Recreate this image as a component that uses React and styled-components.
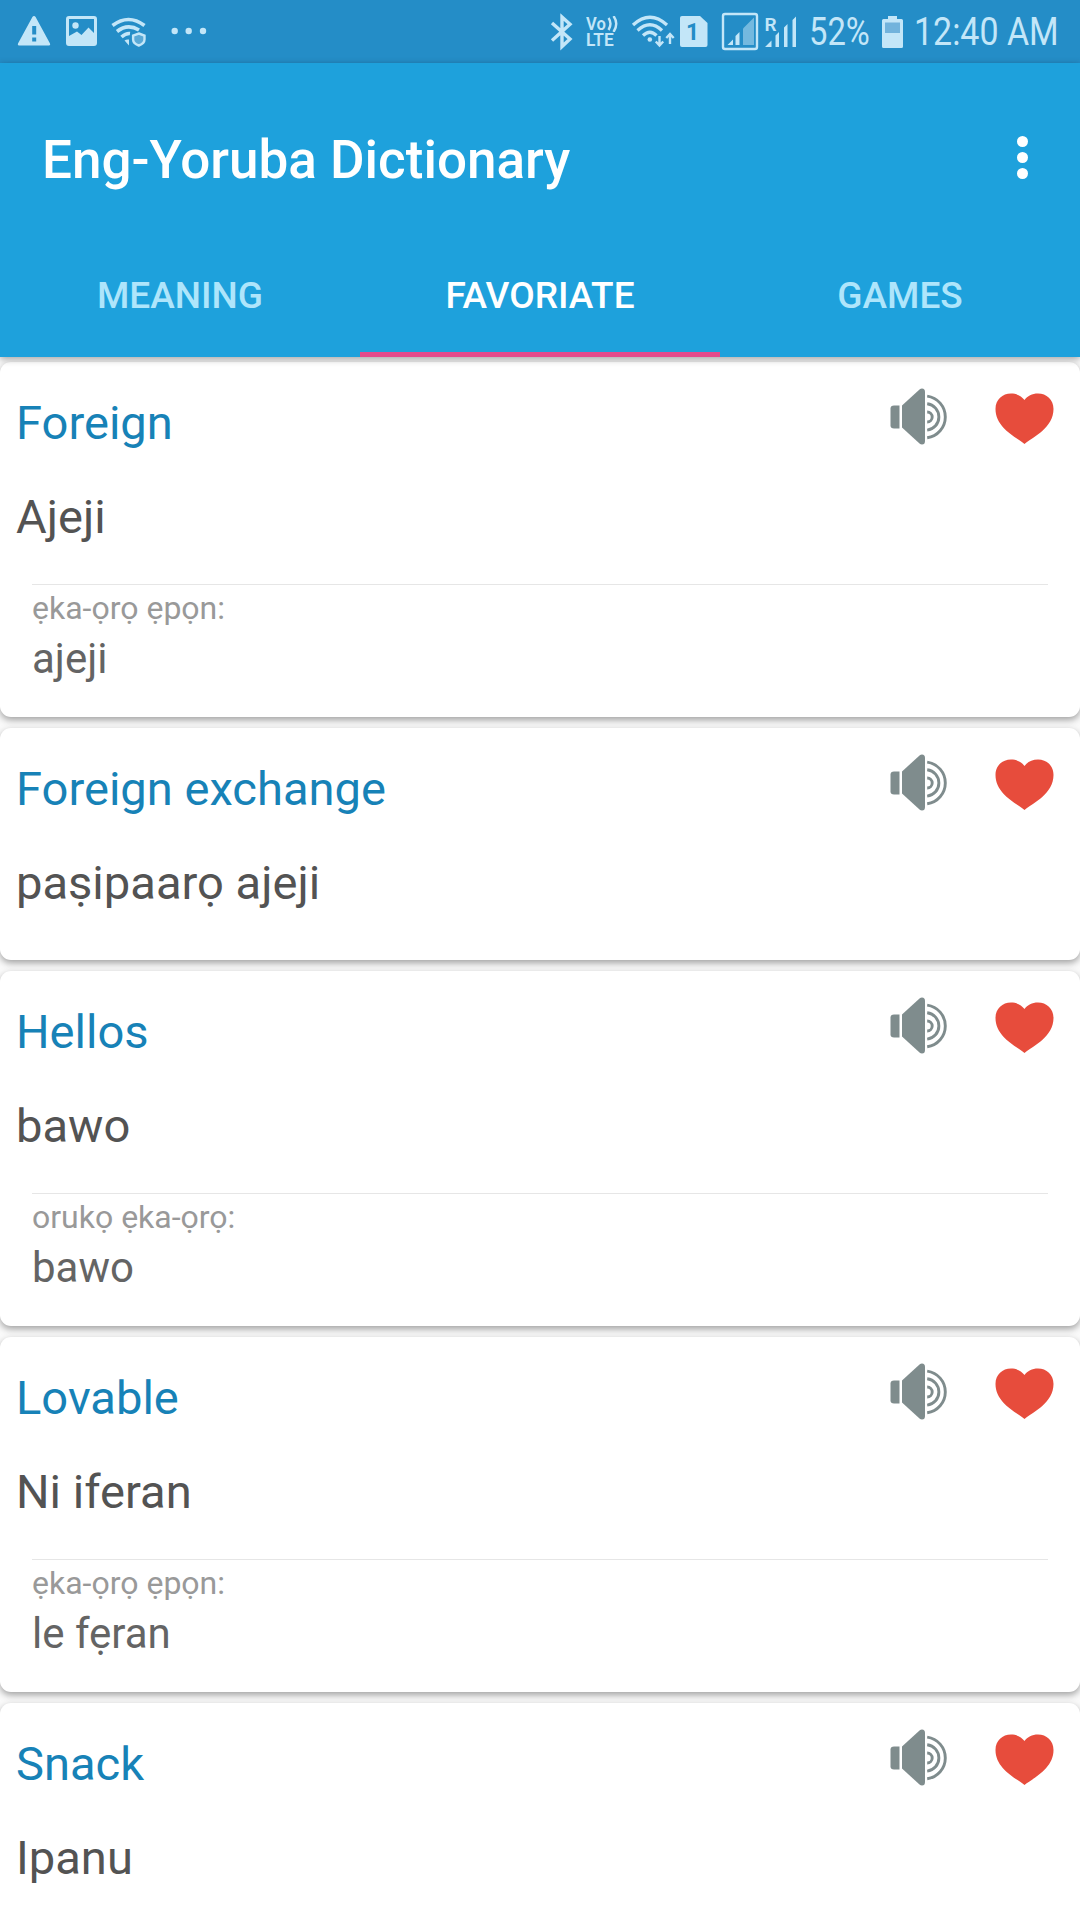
import React from 'react';
import styled, { createGlobalStyle } from 'styled-components';

const GlobalStyle = createGlobalStyle`
  * {
    box-sizing: border-box;
  }
  body {
    margin: 0;
    background: #fafafa;
    font-family: Roboto, 'Liberation Sans', sans-serif;
  }
`;

const Screen = styled.div`
  width: 1080px;
  height: 1920px;
  overflow: hidden;
  display: flex;
  flex-direction: column;
`;

const StatusBar = styled.div`
  flex: none;
  height: 63px;
  display: flex;
  justify-content: space-between;
  padding: 0 22px 0 16px;
  background: #248dc7;
  color: #c3e6f8;
`;
const StatusGroup = styled.div`
  display: flex;
`;
const StatusIcon = styled.svg`
  display: block;
  flex: none;
  height: 63px;
  width: ${props => props.$width}px;
  margin-left: ${props => props.$gap || 0}px;
  fill: currentColor;
  font-family: Roboto, sans-serif;
`;
const StatusText = styled.div`
  width: ${props => props.$width}px;
  margin-left: ${props => props.$gap}px;
  font-size: 39px;
  line-height: 65px;
  white-space: nowrap;

  span {
    display: inline-block;
    transform: scaleX(${props => props.$stretch});
    transform-origin: 0 50%;
  }
`;
const Volte = styled.div`
  width: 34px;
  margin-left: 13px;
  padding-top: 16px;
  font-size: 18px;
  font-weight: 600;
  line-height: 16px;
`;
const VolteRow = styled.div`
  height: 16px;
  display: flex;
  white-space: nowrap;

  span {
    width: ${props => props.$width}px;
    transform: scaleX(${props => props.$stretch});
    transform-origin: 0 50%;
  }
`;
const Waves = styled.svg`
  width: 12px;
  height: 16px;
  fill: none;
  stroke: currentColor;
  stroke-width: 2.4;
`;

const Header = styled.header`
  flex: none;
  position: relative;
  z-index: 1;
  background: #1ea1dc;
  color: white;
  box-shadow: 0 2px 7px rgba(0, 0, 0, 0.35);
`;
const Toolbar = styled.div`
  height: 189px;
  display: flex;
  align-items: center;
  justify-content: space-between;
  padding: 0 52px 0 42px;
`;
const Title = styled.h1`
  margin: 4px 0 0;
  font-size: 53px;
  font-weight: 500;
  line-height: 62px;
`;
const MenuButton = styled.button`
  display: flex;
  flex-direction: column;
  gap: 5px;
  padding: 0;
  border: 0;
  background: none;
`;
const Dot = styled.span`
  width: 11px;
  height: 11px;
  border-radius: 50%;
  background: white;
`;
const Tabs = styled.nav`
  height: 105px;
  display: flex;
`;
const Tab = styled.div`
  flex: 1;
  display: flex;
  justify-content: center;
  padding-top: 22px;
  border-bottom: 5px solid ${props => (props.$active ? '#e64a8b' : 'transparent')};
  color: ${props => (props.$active ? 'white' : '#aee5fb')};
  font-size: 37px;
  font-weight: 500;
  line-height: 44px;
`;

const List = styled.main`
  display: flex;
  flex-direction: column;
  gap: 11px;
  padding-top: 5px;
`;
const Card = styled.article`
  flex: none;
  height: ${props => (props.$detailed ? 355 : 232)}px;
  padding: 24px 16px 0;
  border-radius: 11px;
  background: white;
  box-shadow: 0 3px 7px rgba(0, 0, 0, 0.36);
`;
const CardTop = styled.div`
  height: 94px;
  display: flex;
  justify-content: space-between;
`;
const Word = styled.h2`
  margin: 9px 0 0;
  color: #1782b7;
  font-size: 47.1px;
  font-weight: 400;
  line-height: 56px;
`;
const Actions = styled.div`
  display: flex;
  gap: 44px;
  padding-right: 10px;
`;
const ActionIcon = styled.svg`
  width: 60px;
  height: 60px;
`;
const Meaning = styled.p`
  margin: 9px 0 0;
  color: #535353;
  font-size: 47.1px;
  line-height: 56px;
`;
const Detail = styled.div`
  margin: 39px 16px 0;
  padding-top: 4px;
  border-top: 1px solid #e6e6e6;
`;
const Label = styled.p`
  margin: 0;
  color: #999;
  font-size: 32px;
  line-height: 38px;
`;
const Usage = styled.p`
  margin: 7px 0 0;
  color: #646464;
  font-size: 42px;
  line-height: 50px;
`;

const entries = [
  { word: 'Foreign', meaning: 'Ajeji', label: 'ẹka-ọrọ ẹpọn:', usage: 'ajeji' },
  { word: 'Foreign exchange', meaning: 'paṣipaarọ ajeji' },
  { word: 'Hellos', meaning: 'bawo', label: 'orukọ ẹka-ọrọ:', usage: 'bawo' },
  { word: 'Lovable', meaning: 'Ni iferan', label: 'ẹka-ọrọ ẹpọn:', usage: 'le fẹran' },
  { word: 'Snack', meaning: 'Ipanu' },
];

const Speaker = () => (
  <ActionIcon viewBox="0 0 60 60">
    <g fill="#7f8c8d">
      <path d="M4 19.500H9.500v23H4q-3.500 0-3.500-3v-17q0-3 3.500-3z" />
      <path d="M12 19.500L29.500 3.500q1.200-1 2.500-1 3 0 3 3.500v49q0 3.500-3 3.500-1.300 0-2.500-1L12 41.500z" />
    </g>
    <g fill="none" stroke="#7f8c8d" strokeWidth="2.900">
      <path d="M37.200 26a5 5 0 0 1 0 10" />
      <path d="M37.200 17.700a13.300 13.300 0 0 1 0 26.400" />
      <path d="M37.200 10.100a21 21 0 0 1 0 41.600" />
    </g>
  </ActionIcon>
);

const Heart = () => (
  <ActionIcon viewBox="0 0 60 60">
    <path
      fill="#e74c3c"
      d="M30.500 58C21 50.500 1.500 41.500 1.500 23 1.500 13.500 8.500 7.500 17 7.500c6 0 10.500 2.500 13.500 6.500 3-4 7.500-6.500 13.500-6.500 8.500 0 15.500 6 15.500 15.500C59.500 41.500 40 50.500 30.500 58z"
    />
  </ActionIcon>
);

const LeftStatus = () => (
  <StatusGroup>
    <StatusIcon $width={36} viewBox="16 0 36 63">
      <path
        fillRule="evenodd"
        d="M34 16q1 0 1.600 1L50 43.500q.8 2-1 2H19q-1.800 0-1-2L32.400 17q.6-1 1.600-1zM32.200 26v8.500h4V26zM32.200 37.500v4h4v-4z"
      />
    </StatusIcon>
    <StatusIcon $width={32} $gap={14} viewBox="66 0 32 63">
      <path
        fillRule="evenodd"
        d="M69 16h25q3 0 3 3v24q0 3-3 3H69q-3 0-3-3V19q0-3 3-3zM69 19v17l8-4.500 4.500 3.500 7-7.500 5.500 5.500V19z"
      />
      <circle cx="75.500" cy="25.500" r="3.200" />
    </StatusIcon>
    <StatusIcon $width={38} $gap={12} viewBox="110 0 38 63">
      <g fill="none" stroke="currentColor" strokeWidth="3.600">
        <path d="M112.500 25.500Q128.500 13.500 144.500 25.500" />
        <path d="M117 31.500Q127.500 23 139 30" />
        <path d="M121.500 37Q126 33 130 33.500" />
      </g>
      <path d="M124.500 40.500q2-1.500 4.500-1v6z" />
      <path
        d="M138.800 33.500l5.700 2v4q0 4-5.700 6-5.700-2-5.700-6v-4z"
        fill="#5aa9d6"
        stroke="currentColor"
        strokeWidth="2.400"
      />
    </StatusIcon>
    <StatusIcon $width={38} $gap={22} viewBox="170 0 38 63">
      <circle cx="174.700" cy="31" r="3.200" />
      <circle cx="188.700" cy="31" r="3.200" />
      <circle cx="203" cy="31" r="3.200" />
    </StatusIcon>
  </StatusGroup>
);

const RightStatus = () => (
  <StatusGroup>
    <StatusIcon $width={24} viewBox="549 0 24 63">
      <path
        d="M552 23l18 16-8 7.500V17l8 7.200L552 40.500"
        fill="none"
        stroke="currentColor"
        strokeWidth="3.400"
      />
    </StatusIcon>
    <Volte>
      <VolteRow $width={21} $stretch={0.92}>
        <span>Vo</span>
        <Waves viewBox="0 0 12 16">
          <path d="M1.500 2q4 5.500 0 12M6.500 0q5.500 7.500 0 16" />
        </Waves>
      </VolteRow>
      <VolteRow $width={33} $stretch={0.96}>
        <span>LTE</span>
      </VolteRow>
    </Volte>
    <StatusIcon $width={46} $gap={11} viewBox="631 0 46 63">
      <g fill="none" stroke="currentColor" strokeWidth="3.300">
        <path d="M633 25Q650 9.500 667 25" />
        <path d="M637.500 30.500Q650 19 662 30.500" />
        <path d="M643 35.500Q650 29 656.500 35.500" />
      </g>
      <circle cx="649.800" cy="39.500" r="2.300" />
      <path
        d="M659.500 36v9M655.800 41.500l3.700 4 3.700-4M670 44v-10M666.300 38l3.700-4 3.700 4"
        fill="none"
        stroke="currentColor"
        strokeWidth="2.400"
      />
    </StatusIcon>
    <StatusIcon $width={28} $gap={3} viewBox="680 0 28 63">
      <path d="M682 16h18l7.500 7v22q0 2-2 2H682q-2 0-2-2V18q0-2 2-2z" />
      <text x="686" y="40" fontSize="23" fontWeight="700" fill="#248dc7">1</text>
    </StatusIcon>
    <StatusIcon $width={38} $gap={13} viewBox="721 0 38 63">
      <rect x="723" y="14" width="34" height="35" rx="2" fill="none" stroke="currentColor" strokeWidth="2.400" />
      <path d="M727.500 45l5.500-5.500V45zM735.500 45V36l4-4v13z" />
      <path d="M743 45V28.500L754 17.500V45z" opacity=".5" />
    </StatusIcon>
    <StatusIcon $width={34} $gap={5} viewBox="764 0 34 63">
      <text x="764.500" y="31" fontSize="19" fontWeight="600">R</text>
      <path d="M765 47l6.500-6.500V47zM775.500 47V35.500l3.500-3.500v15zM784 47V27.500l3.500-3.500v23zM792.500 47V20l3.500-3.500V47z" />
    </StatusIcon>
    <StatusText $width={62} $gap={11} $stretch={0.84}>
      <span>52%</span>
    </StatusText>
    <StatusIcon $width={22} $gap={11} viewBox="882 0 22 63">
      <path d="M888 16h9v3h4.500q1.500 0 1.500 1.500v26q0 1.500-1.500 1.500h-18q-1.500 0-1.500-1.500v-26q0-1.500 1.500-1.500h4.500z" />
      <path d="M885 22.500h15V33h-15z" fill="#72b3dc" />
    </StatusIcon>
    <StatusText $width={144} $gap={10} $stretch={0.87}>
      <span>12:40 AM</span>
    </StatusText>
  </StatusGroup>
);

export default function App() {
  return (
    <Screen>
      <GlobalStyle />
      <StatusBar>
        <LeftStatus />
        <RightStatus />
      </StatusBar>
      <Header>
        <Toolbar>
          <Title>Eng-Yoruba Dictionary</Title>
          <MenuButton>
            <Dot />
            <Dot />
            <Dot />
          </MenuButton>
        </Toolbar>
        <Tabs>
          <Tab>MEANING</Tab>
          <Tab $active>FAVORIATE</Tab>
          <Tab>GAMES</Tab>
        </Tabs>
      </Header>
      <List>
        {entries.map(entry => (
          <Card key={entry.word} $detailed={!!entry.usage}>
            <CardTop>
              <Word>{entry.word}</Word>
              <Actions>
                <Speaker />
                <Heart />
              </Actions>
            </CardTop>
            <Meaning>{entry.meaning}</Meaning>
            {entry.usage && (
              <Detail>
                <Label>{entry.label}</Label>
                <Usage>{entry.usage}</Usage>
              </Detail>
            )}
          </Card>
        ))}
      </List>
    </Screen>
  );
}
